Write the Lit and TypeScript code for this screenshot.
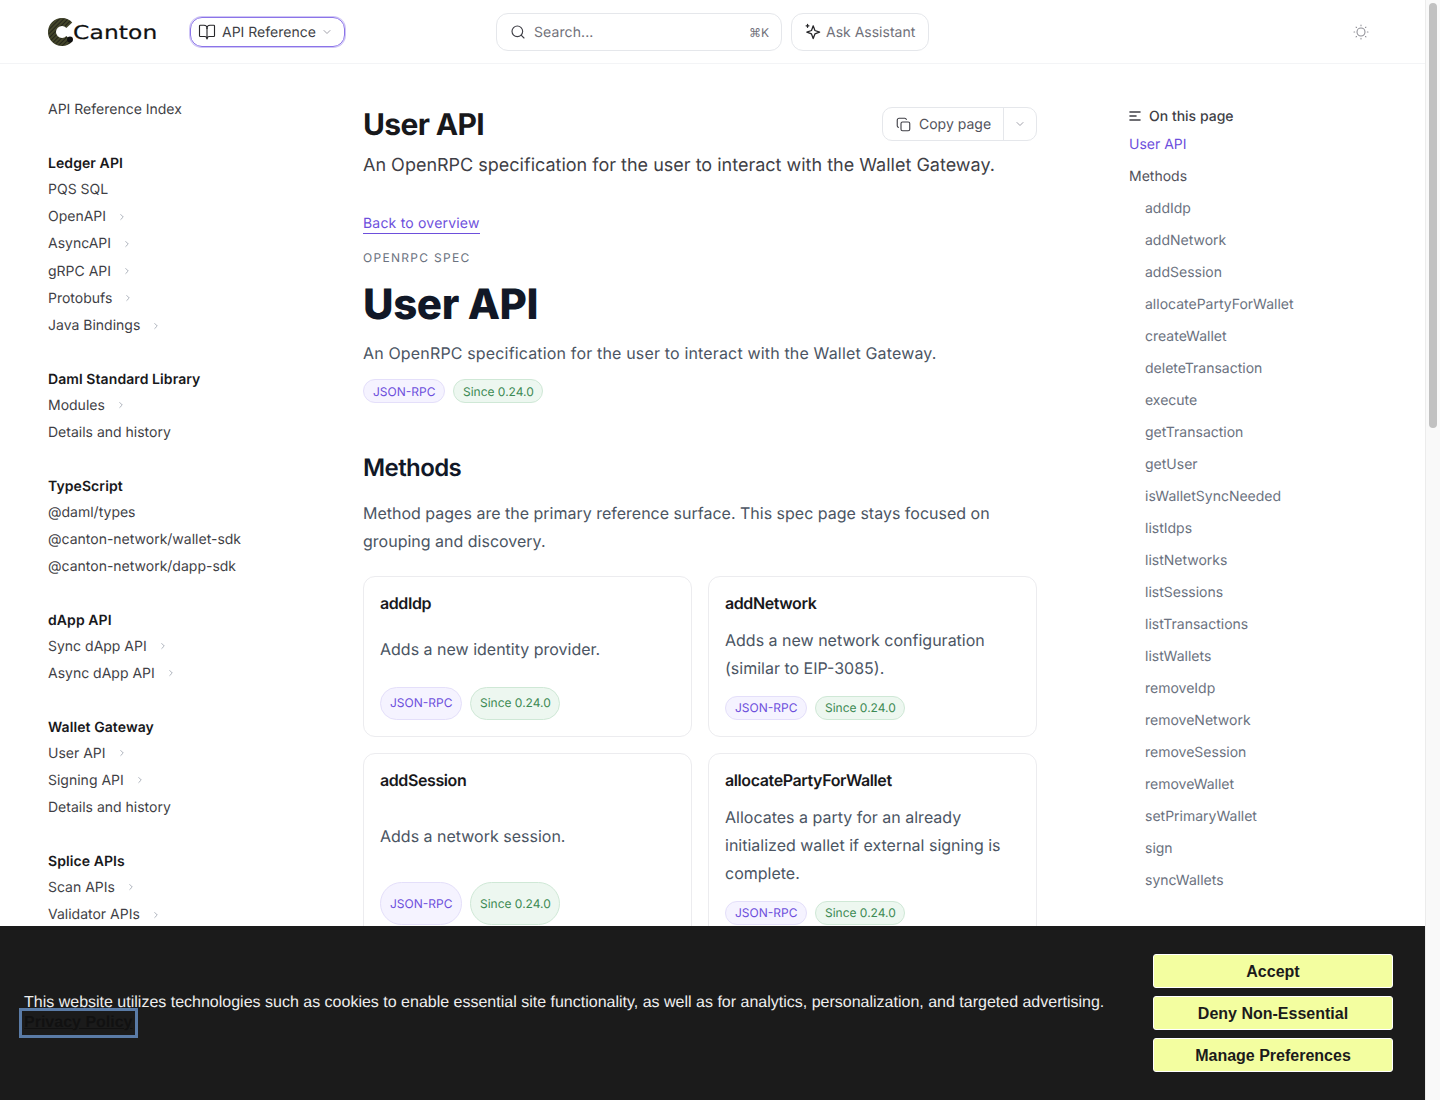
import { LitElement, html, css, svg } from 'lit';
import { customElement } from 'lit/decorators.js';

type NavItem = { label: string; more?: boolean };
type NavGroup = { title: string; items: NavItem[] };

const NAV: NavGroup[] = [
  { title: 'Ledger API', items: [
    { label: 'PQS SQL' }, { label: 'OpenAPI', more: true }, { label: 'AsyncAPI', more: true },
    { label: 'gRPC API', more: true }, { label: 'Protobufs', more: true }, { label: 'Java Bindings', more: true },
  ] },
  { title: 'Daml Standard Library', items: [{ label: 'Modules', more: true }, { label: 'Details and history' }] },
  { title: 'TypeScript', items: [
    { label: '@daml/types' }, { label: '@canton-network/wallet-sdk' }, { label: '@canton-network/dapp-sdk' },
  ] },
  { title: 'dApp API', items: [{ label: 'Sync dApp API', more: true }, { label: 'Async dApp API', more: true }] },
  { title: 'Wallet Gateway', items: [
    { label: 'User API', more: true }, { label: 'Signing API', more: true }, { label: 'Details and history' },
  ] },
  { title: 'Splice APIs', items: [{ label: 'Scan APIs', more: true }, { label: 'Validator APIs', more: true }] },
];

const TOC = [
  'addIdp', 'addNetwork', 'addSession', 'allocatePartyForWallet', 'createWallet', 'deleteTransaction',
  'execute', 'getTransaction', 'getUser', 'isWalletSyncNeeded', 'listIdps', 'listNetworks', 'listSessions',
  'listTransactions', 'listWallets', 'removeIdp', 'removeNetwork', 'removeSession', 'removeWallet',
  'setPrimaryWallet', 'sign', 'syncWallets',
];

const METHODS = [
  { name: 'addIdp', text: 'Adds a new identity provider.' },
  { name: 'addNetwork', text: 'Adds a new network configuration (similar to EIP-3085).' },
  { name: 'addSession', text: 'Adds a network session.' },
  { name: 'allocatePartyForWallet', text: 'Allocates a party for an already initialized wallet if external signing is complete.' },
];

const chevronDown = svg`<path d="M6 9l6 6 6-6" />`;

@customElement('app-root')
export class AppRoot extends LitElement {
  static styles = css`
    :host {
      display: block;
      height: 1100px;
      overflow: hidden;
      background: #fff;
      font-family: Inter, 'Liberation Sans', sans-serif;
      color: #18181b;
      text-rendering: geometricPrecision;
    }
    * { box-sizing: border-box; }
    svg { display: block; fill: none; stroke: currentColor; stroke-linecap: round; stroke-linejoin: round; }
    a { color: inherit; text-decoration: none; }

    .page { display: flex; height: 1100px; }
    .viewport { position: relative; flex: 1; min-width: 0; height: 1100px; overflow: hidden; }
    .scrollbar { width: 15px; background: #f9f9f9; border-left: 1px solid #ececec; padding: 3px 3px 0 3px; }
    .thumb { height: 425px; background: #c1c1c1; border-radius: 4px; }

    header {
      display: flex;
      align-items: center;
      height: 64px;
      padding: 0 48px;
      border-bottom: 1px solid #f3f4f6;
    }
    header span, header kbd { padding-top: 2px; }
    .brand { display: flex; align-items: center; width: 142px; }
    .brand-name {
      display: inline-block;
      margin-left: -3px;
      font-family: 'DejaVu Sans', sans-serif;
      font-size: 19px;
      letter-spacing: 0.1px;
      color: #111;
      -webkit-text-stroke: 0.2px #111;
      transform: scaleX(1.23);
      transform-origin: left center;
    }
    .api-btn {
      display: flex;
      align-items: center;
      width: 155px;
      height: 30px;
      padding: 0 9px 0 7px;
      border: 1px solid #8b74e8;
      border-radius: 12px;
      box-shadow: 0 0 0 1px #cfc5f6;
      font-size: 14px;
      color: #3f3f46;
    }
    .api-btn .book { width: 18px; height: 18px; stroke-width: 1.5; margin-right: 6px; color: #27272a; }
    .api-btn .chev { width: 12px; height: 12px; stroke-width: 2; margin-left: 5px; color: #a1a1aa; }
    .search {
      display: flex;
      align-items: center;
      width: 286px;
      height: 38px;
      margin-left: 151px;
      padding: 0 12px 0 13px;
      border: 1px solid #e5e7eb;
      border-radius: 12px;
      font-size: 14px;
      color: #71717a;
    }
    .search svg { width: 16px; height: 16px; stroke-width: 1.7; margin-right: 8px; color: #3f3f46; }
    .search kbd { margin-left: auto; font: inherit; font-size: 12px; }
    .search span { letter-spacing: 0.1px; }
    .ask {
      display: flex;
      align-items: center;
      width: 138px;
      height: 38px;
      margin-left: 9px;
      padding-left: 12px;
      border: 1px solid #e5e7eb;
      border-radius: 12px;
      font-size: 14px;
      color: #71717a;
    }
    .ask svg { width: 17px; height: 17px; stroke-width: 1.8; margin-right: 5px; color: #27272a; }
    .sun { margin-left: auto; margin-right: 8px; width: 16px; height: 16px; stroke-width: 1.6; color: #8f8f96; }

    .body { display: flex; align-items: flex-start; }

    .side { width: 363px; padding: 34px 0 0 48px; font-size: 14px; color: #3f3f46; flex: none; }
    .side .index { height: 24px; line-height: 24px; margin-bottom: 30px; }
    .group { margin-bottom: 28.55px; }
    .group h4 { margin: 0; height: 24px; line-height: 24px; font-size: 14px; font-weight: 600; color: #18181b; letter-spacing: 0.08px; }
    .item { display: flex; align-items: center; height: 27.2px; }
    .item svg { width: 10px; height: 10px; stroke-width: 2; margin-left: 11px; color: #9ca3af; }

    main { width: 674px; flex: none; padding-top: 43px; }
    .title-row { display: flex; justify-content: space-between; align-items: flex-start; height: 45px; }
    .title-row h1 { margin: 0; font-size: 30px; line-height: 36px; font-weight: 700; letter-spacing: -0.65px; color: #18181b; }
    .copy {
      display: flex;
      align-items: center;
      height: 34px;
      border: 1px solid #e5e7eb;
      border-radius: 10px;
      font-size: 14px;
      color: #52525b;
    }
    .copy .main-part { display: flex; align-items: center; width: 121px; height: 100%; padding-left: 13px; border-right: 1px solid #e5e7eb; }
    .copy .main-part svg { width: 15px; height: 15px; stroke-width: 1.8; margin-right: 8px; color: #3f3f46; }
    .copy .chev-part { display: flex; align-items: center; justify-content: center; width: 32px; }
    .copy .chev-part svg { width: 12px; height: 12px; stroke-width: 2; color: #a1a1aa; }
    .lead { margin: 0; font-size: 18px; line-height: 28px; color: #3f3f46; }
    .back {
      display: inline-block;
      margin-top: 35px;
      font-size: 14px;
      line-height: 18px;
      color: #6d4fdc;
      border-bottom: 1px solid #6d4fdc;
      letter-spacing: 0.2px;
    }
    .eyebrow { margin: 16px 0 0; font-size: 12px; line-height: 16px; letter-spacing: 1.3px; color: #6b7280; text-transform: uppercase; }
    .spec-title { margin: 11px 0 0; font-size: 42px; line-height: 56px; font-weight: 800; letter-spacing: -0.4px; color: #111827; }
    .spec-text { margin: 6px 0 0; font-size: 16px; line-height: 28px; letter-spacing: 0.16px; color: #4b5563; }
    .tags { display: flex; gap: 8px; }
    .spec-tags { margin-top: 12px; height: 24px; }
    .tag {
      display: flex;
      align-items: center;
      padding: 0 9px;
      min-height: 24px;
      border-radius: 999px;
      font-size: 12px;
    }
    .tag.rpc { background: #f5f3ff; border: 1px solid #e4dffa; color: #6d4fdc; }
    .tag.since { background: #edf7f0; border: 1px solid #cfe8d6; color: #3d8a54; padding: 0 8.5px; }
    h2 { margin: 48px 0 0; font-size: 24px; line-height: 34px; font-weight: 600; color: #111827; letter-spacing: -0.6px; }
    .intro { margin: 14px 0 0; font-size: 16px; line-height: 28px; color: #4b5563; }
    .cards { display: grid; grid-template-columns: 329px 329px; gap: 16px; margin-top: 21px; }
    .card {
      display: grid;
      padding: 16px;
      border: 1px solid #ececef;
      border-radius: 12px;
      align-content: stretch;
    }
    .card h3 { margin: 0; font-size: 16px; line-height: 21px; font-weight: 600; color: #18181b; letter-spacing: -0.4px; }
    .card p { margin: 12px 0 0; font-size: 16px; line-height: 28px; color: #4b5563; }
    .card .tags { margin-top: 14px; align-items: stretch; }
    .card .tag { padding-bottom: 1px; }

    .toc { margin-left: 92px; padding-top: 40px; font-size: 14px; color: #52525b; flex: none; }
    .toc-head { display: flex; align-items: center; height: 24px; font-weight: 500; color: #3f3f46; }
    .toc-head svg { width: 12px; height: 12px; stroke-width: 1.6; margin-right: 8px; }
    .toc a { display: flex; align-items: center; height: 32px; }
    .toc a.active { color: #6d4fdc; }
    .toc a.sub { padding-left: 16px; color: #6b7280; }

    .cookie {
      position: absolute;
      left: 0;
      right: 0;
      bottom: 0;
      height: 174px;
      display: flex;
      align-items: center;
      padding: 0 32px 0 24px;
      background: #1b1b1b;
      font-family: 'Liberation Sans', Arial, sans-serif;
      font-size: 16px;
      color: #eeeeee;
    }
    .cookie-text { flex: 1; line-height: 20px; margin-top: -1px; }
    .cookie-text a {
      display: inline-block;
      margin-top: -3px;
      font-weight: 700;
      color: #111;
      text-decoration: underline;
      outline: 3px solid #5a7ba6;
      outline-offset: 2px;
    }
    .cookie-actions { display: flex; flex-direction: column; gap: 8px; width: 240px; }
    .cookie-actions button {
      height: 34px;
      padding: 1px 0 0;
      border: 1px solid #fff;
      border-radius: 3px;
      background: #f3fea0;
      color: #1b1b1b;
      font: 700 16px 'Liberation Sans', Arial, sans-serif;
    }
  `;

  private renderTags() {
    return html`<div class="tags"><span class="tag rpc">JSON-RPC</span><span class="tag since">Since 0.24.0</span></div>`;
  }

  private renderHeader() {
    return html`
      <header>
        <a class="brand" href="#">
          <svg width="28" height="30" viewBox="0 0 28 30" style="stroke:none">
            <defs>
              <pattern id="weave" width="3" height="3" patternUnits="userSpaceOnUse" patternTransform="rotate(45)">
                <rect width="3" height="3" fill="#44462a" />
                <rect width="1" height="3" fill="#23241a" />
              </pattern>
            </defs>
            <path d="M21.3 8.200A10 10 0 1 0 21.300 21.800" fill="none" stroke="url(#weave)" stroke-width="8" stroke-linecap="butt" />
            <circle cx="22" cy="22.500" r="3" fill="#111" />
          </svg>
          <span class="brand-name">Canton</span>
        </a>
        <a class="api-btn" href="#">
          <svg class="book" viewBox="0 0 24 24"><path d="M12 7v14" /><path d="M3 18a1 1 0 0 1-1-1V4a1 1 0 0 1 1-1h5a4 4 0 0 1 4 4 4 4 0 0 1 4-4h5a1 1 0 0 1 1 1v13a1 1 0 0 1-1 1h-6a3 3 0 0 0-3 3 3 3 0 0 0-3-3z" /></svg>
          <span>API Reference</span>
          <svg class="chev" viewBox="0 0 24 24">${chevronDown}</svg>
        </a>
        <div class="search">
          <svg viewBox="0 0 24 24"><circle cx="11" cy="11" r="8" /><path d="M21 21l-4.300-4.300" /></svg>
          <span>Search...</span>
          <kbd>⌘K</kbd>
        </div>
        <div class="ask">
          <svg viewBox="0 0 24 24"><path d="M13 4l2.400 6.600L22 13l-6.600 2.400L13 22l-2.400-6.600L4 13l6.600-2.400z" /><path d="M5 2v4M3 4h4" /></svg>
          <span>Ask Assistant</span>
        </div>
        <svg class="sun" viewBox="0 0 24 24"><circle cx="12" cy="12" r="6" /><path d="M12 1.500v1M12 21.500v1M4.600 4.600l.7.7M18.700 18.700l.7.7M1.500 12h1M21.500 12h1M4.600 19.400l.7-.7M18.700 5.300l.7-.7" /></svg>
      </header>
    `;
  }

  private renderSide() {
    return html`
      <nav class="side">
        <div class="index">API Reference Index</div>
        ${NAV.map((g) => html`
          <div class="group">
            <h4>${g.title}</h4>
            ${g.items.map((i) => html`
              <div class="item">
                <span>${i.label}</span>
                ${i.more ? html`<svg viewBox="0 0 24 24"><path d="M9 6l6 6-6 6" /></svg>` : ''}
              </div>
            `)}
          </div>
        `)}
      </nav>
    `;
  }

  private renderMain() {
    return html`
      <main>
        <div class="title-row">
          <h1>User API</h1>
          <div class="copy">
            <div class="main-part">
              <svg viewBox="0 0 24 24"><rect x="8" y="8" width="14" height="14" rx="2.500" /><path d="M4 16.500A2.500 2.500 0 0 1 2 14V5a3 3 0 0 1 3-3h9a2.500 2.500 0 0 1 2.500 2" /></svg>
              <span>Copy page</span>
            </div>
            <div class="chev-part"><svg viewBox="0 0 24 24">${chevronDown}</svg></div>
          </div>
        </div>
        <p class="lead">An OpenRPC specification for the user to interact with the Wallet Gateway.</p>
        <a class="back" href="#">Back to overview</a>
        <p class="eyebrow">OpenRPC spec</p>
        <h1 class="spec-title">User API</h1>
        <p class="spec-text">An OpenRPC specification for the user to interact with the Wallet Gateway.</p>
        <div class="spec-tags">${this.renderTags()}</div>
        <h2>Methods</h2>
        <p class="intro">Method pages are the primary reference surface. This spec page stays focused on grouping and discovery.</p>
        <div class="cards">
          ${METHODS.map((m) => html`
            <article class="card">
              <h3>${m.name}</h3>
              <p>${m.text}</p>
              ${this.renderTags()}
            </article>
          `)}
        </div>
      </main>
    `;
  }

  private renderToc() {
    return html`
      <aside class="toc">
        <div class="toc-head">
          <svg viewBox="0 0 12 12"><path d="M1 2h10M1 6h6M1 10h10" /></svg>
          <span>On this page</span>
        </div>
        <a class="active" href="#">User API</a>
        <a href="#">Methods</a>
        ${TOC.map((t) => html`<a class="sub" href="#">${t}</a>`)}
      </aside>
    `;
  }

  render() {
    return html`
      <div class="page">
        <div class="viewport">
          ${this.renderHeader()}
          <div class="body">
            ${this.renderSide()}
            ${this.renderMain()}
            ${this.renderToc()}
          </div>
          <section class="cookie">
            <div class="cookie-text">
              This website utilizes technologies such as cookies to enable essential site functionality, as well as for analytics, personalization, and targeted advertising.
              <br /><a href="#">Privacy Policy</a>
            </div>
            <div class="cookie-actions">
              <button>Accept</button>
              <button>Deny Non-Essential</button>
              <button>Manage Preferences</button>
            </div>
          </section>
        </div>
        <div class="scrollbar"><div class="thumb"></div></div>
      </div>
    `;
  }
}
